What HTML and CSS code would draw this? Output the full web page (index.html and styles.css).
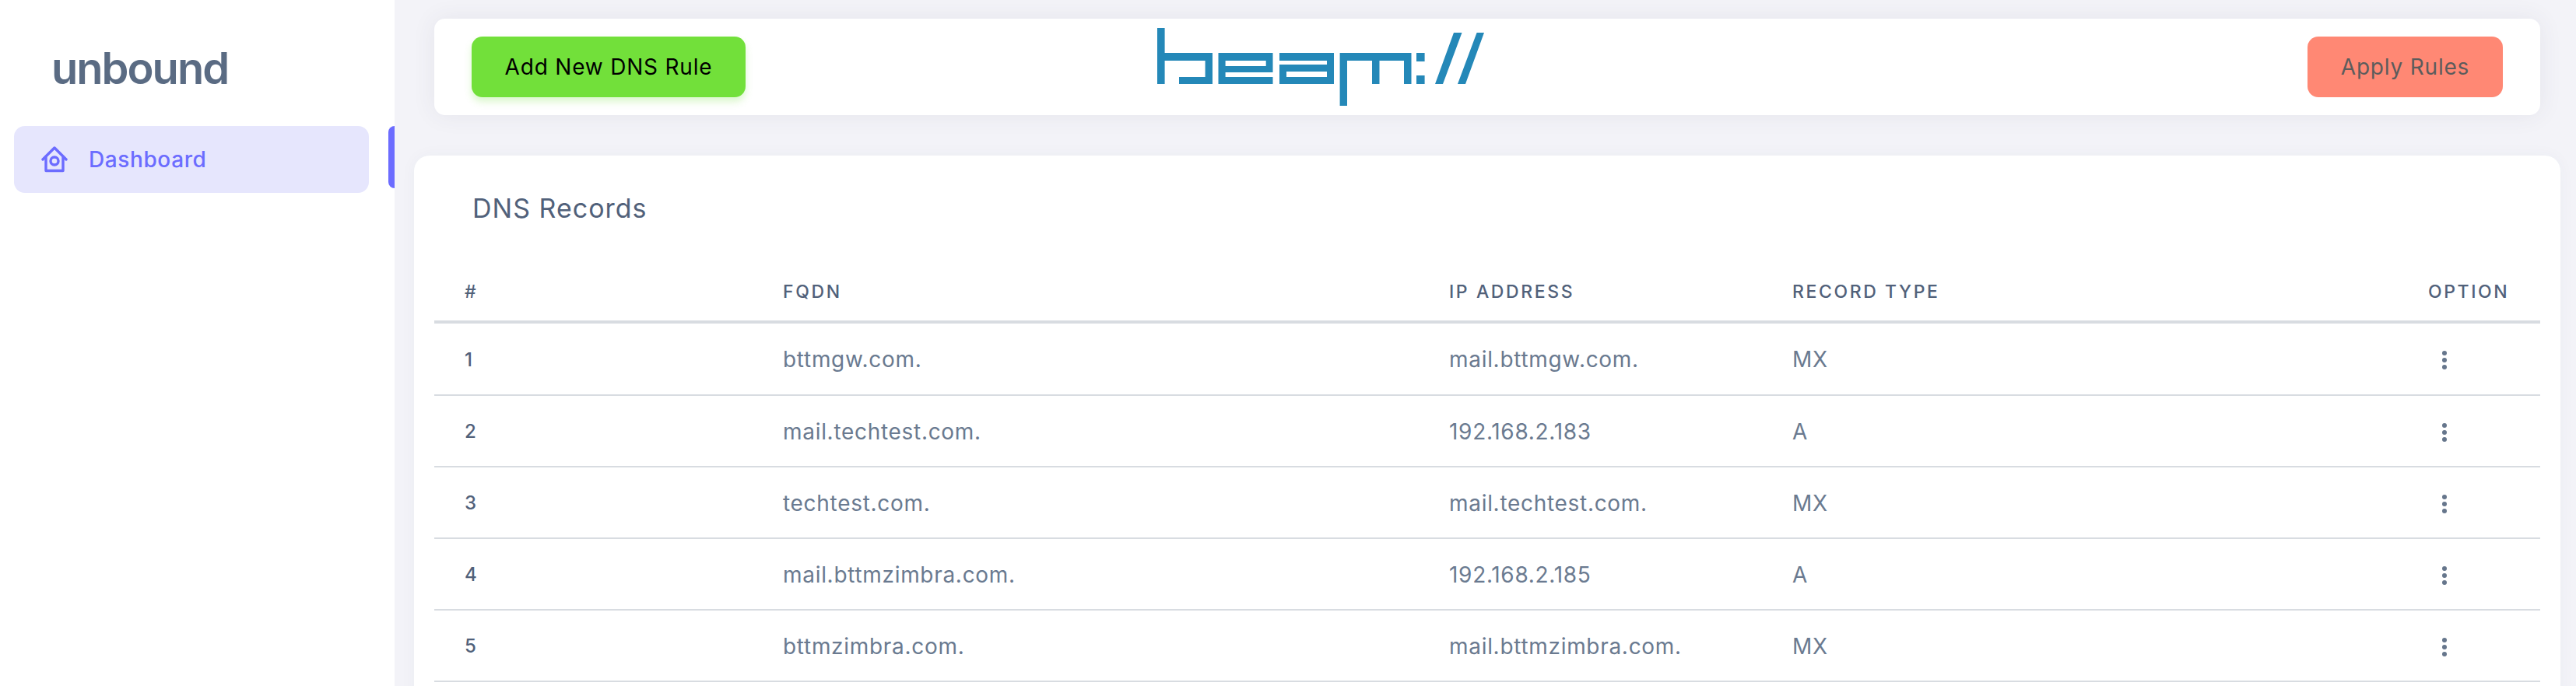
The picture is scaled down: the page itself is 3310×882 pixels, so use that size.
FILE: index.html
```html
<!DOCTYPE html>
<html lang="en">
<head>
    <meta charset="UTF-8">
    <meta name="viewport" content="width=device-width, initial-scale=1.0">
    <title>unbound - DNS Records</title>
    <link rel="stylesheet" href="styles.css">
</head>
<body>
    <div class="layout">
        <aside class="sidebar">
            <div class="brand">unbound</div>
            <div class="nav-row">
                <a class="nav-item" href="#">
                    <svg class="nav-icon" viewBox="0 0 34 34" fill="none" stroke="currentColor" stroke-width="3.4" stroke-linecap="round" stroke-linejoin="round">
                        <path d="M2 17 17 2 32 17"/>
                        <path d="M6 14V31.5H28V14"/>
                        <circle cx="17" cy="19" r="5"/>
                    </svg>
                    Dashboard
                </a>
                <span class="nav-marker"></span>
            </div>
        </aside>

        <main class="main">
            <div class="toolbar">
                <button class="btn btn-add">Add New DNS Rule</button>
                <svg class="logo" viewBox="0 0 420 100" fill="#2488b8" role="img" aria-label="beam://">
                    <path d="M0 0H9.6V32H71V72H28V63H61.6V42H9.6V72H0Z"/>
                    <path fill-rule="evenodd" d="M78.5 32H148.5V57H87.6V63H148.5V72H78.5ZM87.6 42V49H139.7V42Z"/>
                    <path fill-rule="evenodd" d="M157 32H227V72H157ZM157 42V47H218V42ZM166 56V63H218V56Z"/>
                    <path d="M234.6 32H326.5V72H317V42H285.5V72H276V42H244V100H234.6Z"/>
                    <path d="M333 32H343.6V43H333ZM333 61H343.6V72H333Z"/>
                    <path d="M381 6H391.5L367 72H357ZM410.6 6H420L396 72H386Z"/>
                </svg>
                <button class="btn btn-apply">Apply Rules</button>
            </div>

            <div class="card">
                <h2>DNS Records</h2>
                <table>
                    <thead>
                        <tr>
                            <th class="col-num">#</th>
                            <th class="col-fqdn">FQDN</th>
                            <th class="col-ip">IP Address</th>
                            <th>Record Type</th>
                            <th class="col-option">Option</th>
                        </tr>
                    </thead>
                    <tbody>
                        <tr>
                            <td class="num">1</td>
                            <td>bttmgw.com.</td>
                            <td>mail.bttmgw.com.</td>
                            <td>MX</td>
                            <td><span class="dots"><i></i><i></i><i></i></span></td>
                        </tr>
                        <tr>
                            <td class="num">2</td>
                            <td>mail.techtest.com.</td>
                            <td>192.168.2.183</td>
                            <td>A</td>
                            <td><span class="dots"><i></i><i></i><i></i></span></td>
                        </tr>
                        <tr>
                            <td class="num">3</td>
                            <td>techtest.com.</td>
                            <td>mail.techtest.com.</td>
                            <td>MX</td>
                            <td><span class="dots"><i></i><i></i><i></i></span></td>
                        </tr>
                        <tr>
                            <td class="num">4</td>
                            <td>mail.bttmzimbra.com.</td>
                            <td>192.168.2.185</td>
                            <td>A</td>
                            <td><span class="dots"><i></i><i></i><i></i></span></td>
                        </tr>
                        <tr>
                            <td class="num">5</td>
                            <td>bttmzimbra.com.</td>
                            <td>mail.bttmzimbra.com.</td>
                            <td>MX</td>
                            <td><span class="dots"><i></i><i></i><i></i></span></td>
                        </tr>
                    </tbody>
                </table>
            </div>
        </main>
    </div>
</body>
</html>
```

FILE: styles.css
```css
html, body {
    height: 100%;
    overflow: hidden;
}
body {
    font-family: Inter, "Noto Sans", sans-serif;
    margin: 0;
    padding: 0;
    background-color: #f3f3f8;
    color: #5a6b83;
}
.layout {
    display: grid;
    grid-template-columns: 507px 1fr;
    height: 100%;
}
.sidebar {
    background-color: white;
    padding-top: 56px;
}
.brand {
    font-size: 56px;
    line-height: 64px;
    font-weight: 600;
    letter-spacing: -2px;
    color: #5a6b83;
    padding-left: 66px;
    margin-bottom: 42px;
}
.nav-row {
    display: flex;
    justify-content: space-between;
    padding-left: 18px;
}
.nav-item {
    display: flex;
    align-items: center;
    gap: 27px;
    width: 456px;
    height: 86px;
    box-sizing: border-box;
    padding-left: 35px;
    border-radius: 14px;
    background-color: #e6e6fd;
    color: #6c6cff;
    font-size: 28px;
    font-weight: 500;
    letter-spacing: 0.6px;
    text-decoration: none;
}
.nav-icon {
    width: 34px;
    height: 34px;
}
.nav-marker {
    width: 8px;
    height: 80px;
    border-radius: 8px 0 0 8px;
    background-color: #6c6cff;
}
.main {
    padding: 24px 20px 0 25px;
    overflow: hidden;
}
.toolbar {
    display: flex;
    align-items: center;
    justify-content: space-between;
    position: relative;
    height: 124px;
    margin: 0 26px 52px 26px;
    padding: 0 48px;
    border-radius: 14px;
    background-color: white;
    box-shadow: 0 0 30px rgba(60, 70, 90, 0.08);
}
.logo {
    position: absolute;
    left: 929px;
    top: 12px;
    width: 420px;
    height: 100px;
}
.btn {
    height: 78px;
    border: none;
    border-radius: 14px;
    font-family: inherit;
    font-size: 28px;
    letter-spacing: 0.8px;
}
.btn-add {
    width: 352px;
    background-color: #72e03a;
    color: black;
    box-shadow: 0 6px 10px rgba(114, 224, 58, 0.25);
}
.btn-apply {
    width: 251px;
    background-color: #ff8874;
    color: #5c5c5c;
}
.card {
    height: 100%;
    padding: 47px 26px 0;
    border-radius: 20px;
    background-color: white;
    box-shadow: 0 0 20px rgba(60, 70, 90, 0.04);
}
h2 {
    margin: 0 0 47px 49px;
    font-size: 34px;
    line-height: 42px;
    font-weight: 400;
    letter-spacing: 1px;
    color: #51617a;
}
table {
    width: 100%;
    table-layout: fixed;
    border-collapse: separate;
    border-spacing: 0;
}
th, td {
    padding: 1px 0 0 41px;
    text-align: left;
}
th {
    height: 75px;
    border-bottom: 4px solid #d8dce1;
    font-size: 23px;
    font-weight: 500;
    letter-spacing: 2.6px;
    text-transform: uppercase;
    color: #51617a;
}
td {
    height: 89px;
    border-bottom: 2px solid #d8dce1;
    font-size: 28px;
    letter-spacing: 0.7px;
    color: #6a7a90;
}
tbody tr:first-child td {
    height: 90px;
}
.col-num { width: 368px; }
.col-fqdn { width: 815px; }
.col-ip { width: 400px; }
.col-option { width: 144px; }
th.col-num, td.num {
    padding-left: 39px;
}
td.num {
    font-size: 24px;
    font-weight: 500;
    color: #51617a;
}
.dots {
    display: flex;
    flex-direction: column;
    gap: 3px;
    margin: 2px 0 0 18px;
}
.dots i {
    width: 6px;
    height: 6px;
    border-radius: 50%;
    background-color: #66768c;
}
```
